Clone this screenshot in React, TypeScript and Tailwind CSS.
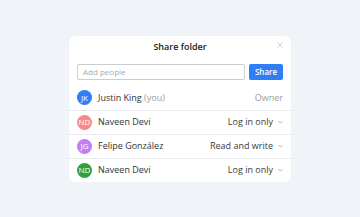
import { X } from 'lucide-react';

const members = [
  { initials: 'JK', name: 'Justin King', you: true, role: 'Owner', color: 'bg-[#2f7ef5]' },
  { initials: 'ND', name: 'Naveen Devi', role: 'Log in only', color: 'bg-[#f48b88]' },
  { initials: 'JG', name: 'Felipe González', role: 'Read and write', color: 'bg-[#c27ef2]' },
  { initials: 'ND', name: 'Naveen Devi', role: 'Log in only', color: 'bg-[#2ea23b]' }
];

function Chevron() {
  return (
    <svg width="5" height="4" viewBox="0 0 5 4" className="ml-[5px] shrink-0">
      <path d="M0.5 1 L2.5 3 L4.5 1" fill="none" stroke="#9aa0a8" strokeWidth="0.8" />
    </svg>
  );
}

export default function App() {
  return (
    <main className="flex h-screen items-center justify-center bg-[#f0f3f8] font-['Open_Sans',sans-serif]">
      <div className="w-[222px] rounded-md bg-white">
        <header className="relative flex h-[22px] items-center justify-center pt-px">
          <h1 className="text-[9px] leading-[12px] font-semibold text-[#222]">Share folder</h1>
          <button className="absolute right-[6px] top-[4px] text-[#9ea2a8]" aria-label="Close">
            <X size={10} strokeWidth={1.2} />
          </button>
        </header>

        <div className="mt-[6px] flex gap-1 px-2">
          <div className="flex h-4 flex-1 items-center rounded-[2px] border border-[#c9ccd1] px-[5px]">
            <span className="text-[8px] text-[#a6a9ae]">Add people</span>
          </div>
          <button className="h-4 w-[34px] rounded-[2px] bg-[#2f7ef5] text-[8px] font-semibold text-white">
            Share
          </button>
        </div>

        <ul className="mt-[6px]">
          {members.map((m, i) => (
            <li
              key={i}
              className={`flex h-6 items-center px-2 ${i > 0 ? 'border-t border-[#e8eaee]' : ''}`}
            >
              <span
                className={`flex h-[15px] w-[15px] shrink-0 items-center justify-center rounded-full text-[8px] font-medium text-white ${m.color}`}
              >
                {m.initials}
              </span>
              <span className="ml-[6px] text-[9px] text-[#333]">
                {m.name}
                {m.you && <span className="text-[#9c9ea3]"> (you)</span>}
              </span>
              <span className="ml-auto flex items-center">
                {m.you ? (
                  <span className="text-[9px] text-[#9c9ea3]">{m.role}</span>
                ) : (
                  <>
                    <span className="text-[9px] text-[#3a3a3a]">{m.role}</span>
                    <Chevron />
                  </>
                )}
              </span>
            </li>
          ))}
        </ul>
      </div>
    </main>
  );
}
